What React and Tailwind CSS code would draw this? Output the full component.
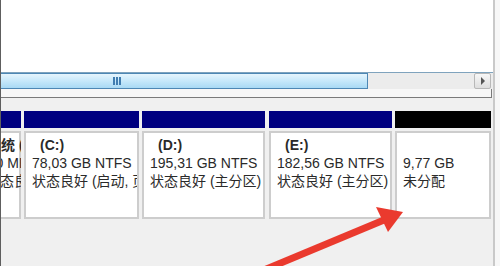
export default function App() {
  return (
    <div className="relative w-[500px] h-[266px] overflow-hidden bg-[#f0f0f0] font-['Liberation_Sans','Noto_Sans_CJK_SC',sans-serif] text-[14px] text-[#2a2a2a]">
      <div className="flex h-full">
        {/* main pane */}
        <div className="w-[493px] flex flex-col border-l border-[#5e5e5e]">
          <div className="h-[72px] bg-white" />

          {/* horizontal scrollbar */}
          <div className="h-[17px] flex border-t border-[#7fa3bd] bg-[#ececec]">
            <div className="w-[367px] flex items-center justify-center border border-l-0 border-[#4d87b4] bg-gradient-to-b from-[#e6f5fd] via-[#c6e8fa] to-[#a8d9f4]">
              <div className="flex gap-[1px] -ml-[134px]">
                <span className="w-[2px] h-[8px] bg-[#3f7cb0]" />
                <span className="w-[2px] h-[8px] bg-[#3f7cb0]" />
                <span className="w-[2px] h-[8px] bg-[#3f7cb0]" />
              </div>
            </div>
            <div className="flex-1" />
            <div className="w-[17px] mr-[2px] flex items-center justify-center border border-[#b8b8b8] rounded-[2px] bg-gradient-to-b from-[#f7f7f7] to-[#dedede]">
              <span className="w-0 h-0 border-y-[4px] border-y-transparent border-l-[4px] border-l-[#555]" />
            </div>
          </div>

          <div className="h-[9px] w-[491px] bg-[#f7f7f7] border-b border-r border-[#7a7a7a]" />
          <div className="h-[13px]" />

          {/* partitions */}
          <div className="flex">
            <div className="w-[20px] flex flex-col overflow-hidden">
              <div className="h-[17px] bg-[#000080]" />
              <div className="mt-[3px] h-[88px] border-2 border-l-0 border-[#cdcdcd] bg-white pt-[3px] leading-[18px] whitespace-nowrap">
                <div className="-ml-[14px] font-bold">系统 (</div>
                <div className="-ml-[21px]">100 MB NTFS</div>
                <div className="-ml-[15px]">状态良好 (系统</div>
              </div>
            </div>
            <Part w="w-[115px]" ml="ml-[3px]" head="bg-[#000080]" label="(C:)" size="78,03 GB NTFS" status="状态良好 (启动, 页面文件)" />
            <Part w="w-[123px]" ml="ml-[3px]" head="bg-[#000080]" label="(D:)" size="195,31 GB NTFS" status="状态良好 (主分区)" />
            <Part w="w-[123px]" ml="ml-[4px]" head="bg-[#000080]" label="(E:)" size="182,56 GB NTFS" status="状态良好 (主分区)" />
            <Part w="w-[96px]" ml="ml-[3px]" head="bg-black" label="" size="9,77 GB" status="未分配" />
          </div>
        </div>

        {/* right edge */}
        <div className="flex-1 border-l-2 border-[#c9c9c9] bg-[#f7f7f7]" />
      </div>

      {/* red annotation arrow */}
      <svg className="absolute inset-0" width="500" height="266" viewBox="0 0 500 266">
        <line x1="264" y1="270" x2="384" y2="220" stroke="#ea3a2e" strokeWidth="7" />
        <polygon points="403,212 376,207 388,232" fill="#ea3a2e" />
      </svg>
    </div>
  )
}

function Part({ w, ml, head, label, size, status }) {
  return (
    <div className={`${w} ${ml} flex flex-col overflow-hidden`}>
      <div className={`h-[17px] ${head}`} />
      <div className="mt-[3px] h-[88px] border-2 border-[#cdcdcd] bg-white pl-[6px] pt-[3px] leading-[18px] whitespace-nowrap overflow-hidden">
        <div className="pl-[8px] font-bold h-[18px]">{label}</div>
        <div>{size}</div>
        <div>{status}</div>
      </div>
    </div>
  )
}
